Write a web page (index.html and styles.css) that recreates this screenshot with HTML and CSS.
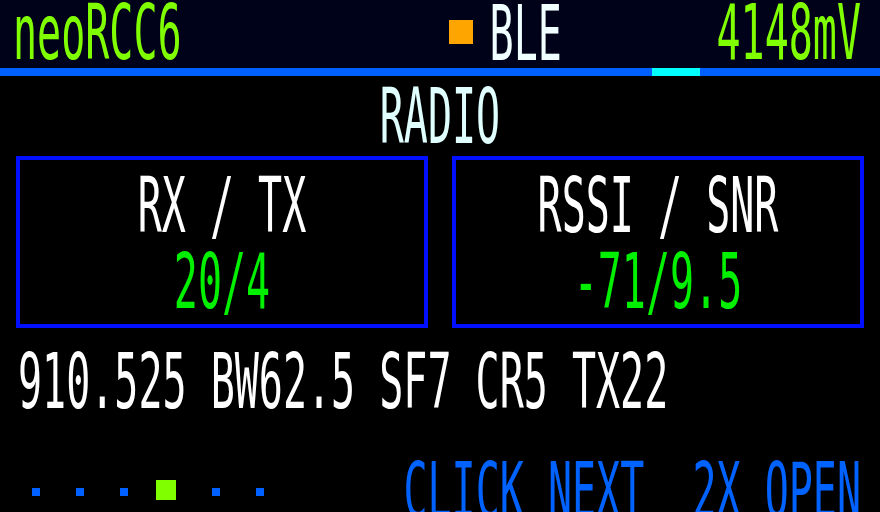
FILE: index.html
```html
<!DOCTYPE html>
<html>
<head>
<meta charset="utf-8">
<link rel="stylesheet" href="styles.css">
</head>
<body>
<div class="screen">
  <header class="topbar">
    <div class="brand"><span class="t">neoRCC6</span></div>
    <div class="status">
      <span class="led"></span>
      <span class="t ble">BLE</span>
    </div>
    <div class="volt"><span class="t">4148mV</span></div>
  </header>
  <div class="progress"><div class="progress-mark"></div></div>
  <div class="title"><span class="t">RADIO</span></div>
  <div class="cards">
    <div class="card">
      <div class="card-line"><span class="t label">RX / TX</span></div>
      <div class="card-line"><span class="t value">20/4</span></div>
    </div>
    <div class="card">
      <div class="card-line"><span class="t label">RSSI / SNR</span></div>
      <div class="card-line"><span class="t value">-71/9.5</span></div>
    </div>
  </div>
  <div class="params"><span class="t">910.525 BW62.5 SF7 CR5 TX22</span></div>
  <footer class="footer">
    <div class="dots">
      <span class="dot"></span>
      <span class="dot"></span>
      <span class="dot"></span>
      <span class="dot active"></span>
      <span class="dot"></span>
      <span class="dot"></span>
    </div>
    <div class="hint"><span class="t">CLICK NEXT  2X OPEN</span></div>
  </footer>
</div>
</body>
</html>
```

FILE: styles.css
```css
* { box-sizing: border-box; }
html, body {
  margin: 0;
  padding: 0;
  background: #000;
}
.screen {
  width: 880px;
  height: 512px;
  overflow: hidden;
  background: #000;
  display: flex;
  flex-direction: column;
}
.screen > * { flex-shrink: 0; }
.t {
  display: inline-block;
  font-family: "DejaVu Sans Mono", monospace;
  font-size: 40px;
  line-height: 30px;
  height: 30px;
  white-space: pre;
  transform: scaleY(1.92);
  transform-origin: 50% 14.3px;
}
.topbar {
  height: 68px;
  padding-bottom: 4px;
  background: #000219;
  display: flex;
  align-items: center;
  color: #80ff00;
}
.brand { padding-left: 13px; }
.status {
  display: flex;
  align-items: center;
  margin-left: 267px;
}
.led {
  width: 24px;
  height: 24px;
  background: #ffa500;
  margin-right: 17px;
}
.ble { color: #f0ffff; }
.volt {
  margin-left: auto;
  padding-right: 19px;
}
.progress {
  height: 8px;
  background: #0060ff;
  display: flex;
}
.progress-mark {
  margin-left: 652px;
  width: 48px;
  background: #00ffff;
}
.title {
  height: 78px;
  display: flex;
  align-items: center;
  justify-content: center;
  color: #e0ffff;
}
.cards {
  margin-top: 2px;
  padding: 0 16px;
  display: flex;
  gap: 24px;
}
.card {
  width: 412px;
  height: 172px;
  border: 4px solid #0010ff;
  padding: 6px 0;
  display: flex;
  flex-direction: column;
}
.card-line {
  height: 76px;
  flex-shrink: 0;
  display: flex;
  align-items: center;
  justify-content: center;
}
.label { color: #fff; }
.value { color: #00f000; }
.params {
  margin-top: 14px;
  height: 76px;
  padding-left: 18px;
  display: flex;
  align-items: center;
  color: #fff;
}
.footer {
  margin-top: 34px;
  height: 76px;
  display: flex;
  align-items: center;
}
.dots {
  display: flex;
  align-items: center;
  gap: 36px;
  padding-left: 32px;
}
.dot {
  width: 8px;
  height: 8px;
  background: #0060ff;
  margin-top: 4px;
}
.dot.active {
  width: 20px;
  height: 20px;
  background: #80ff00;
  margin-top: 0;
  margin-left: -8px;
}
.hint {
  margin-left: auto;
  padding-right: 19px;
  color: #0062ff;
}
```
